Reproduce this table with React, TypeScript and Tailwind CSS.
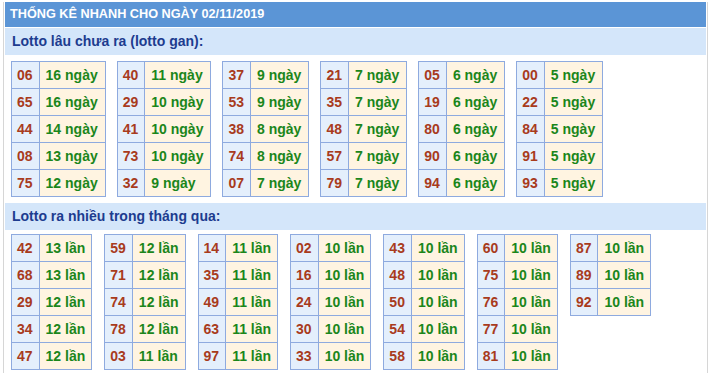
import React from 'react';

type Row = [string, string];

const ganTables: Row[][] = [
  [['06', '16 ngày'], ['65', '16 ngày'], ['44', '14 ngày'], ['08', '13 ngày'], ['75', '12 ngày']],
  [['40', '11 ngày'], ['29', '10 ngày'], ['41', '10 ngày'], ['73', '10 ngày'], ['32', '9 ngày']],
  [['37', '9 ngày'], ['53', '9 ngày'], ['38', '8 ngày'], ['74', '8 ngày'], ['07', '7 ngày']],
  [['21', '7 ngày'], ['35', '7 ngày'], ['48', '7 ngày'], ['57', '7 ngày'], ['79', '7 ngày']],
  [['05', '6 ngày'], ['19', '6 ngày'], ['80', '6 ngày'], ['90', '6 ngày'], ['94', '6 ngày']],
  [['00', '5 ngày'], ['22', '5 ngày'], ['84', '5 ngày'], ['91', '5 ngày'], ['93', '5 ngày']],
];

const hotTables: Row[][] = [
  [['42', '13 lần'], ['68', '13 lần'], ['29', '12 lần'], ['34', '12 lần'], ['47', '12 lần']],
  [['59', '12 lần'], ['71', '12 lần'], ['74', '12 lần'], ['78', '12 lần'], ['03', '11 lần']],
  [['14', '11 lần'], ['35', '11 lần'], ['49', '11 lần'], ['63', '11 lần'], ['97', '11 lần']],
  [['02', '10 lần'], ['16', '10 lần'], ['24', '10 lần'], ['30', '10 lần'], ['33', '10 lần']],
  [['43', '10 lần'], ['48', '10 lần'], ['50', '10 lần'], ['54', '10 lần'], ['58', '10 lần']],
  [['60', '10 lần'], ['75', '10 lần'], ['76', '10 lần'], ['77', '10 lần'], ['81', '10 lần']],
  [['87', '10 lần'], ['89', '10 lần'], ['92', '10 lần']],
];

const LottoTable = ({ rows, wide }: { rows: Row[]; wide?: boolean }) => (
  <table className="border-collapse text-[14px] font-bold leading-[26px]">
    <tbody>
      {rows.map(([num, val]) => (
        <tr key={num + val}>
          <td className="border border-[#8eaadf] bg-[#e4effc] pl-[5px] pr-[6px] py-0 text-[#a83b1d]">{num}</td>
          <td
            className={
              wide
                ? 'border border-[#8eaadf] bg-[#fff4e1] pl-[6px] pr-[7px] py-0 text-[#1b861b] whitespace-nowrap'
                : 'border border-[#8eaadf] bg-[#fff4e1] px-[6px] py-0 text-[#1b861b] whitespace-nowrap'
            }
          >
            {val}
          </td>
        </tr>
      ))}
    </tbody>
  </table>
);

const SectionBar = ({ title }: { title: string }) => (
  <div className="h-[27px] bg-[#d4e6fa] pl-[7px] flex items-center text-[14px] font-bold text-[#1d3c8f]">
    {title}
  </div>
);

export default function App() {
  return (
    <div className="pt-[2px] pl-[3px] bg-white h-[373px] w-[709px]" style={{ fontFamily: '"Liberation Sans", Arial, sans-serif' }}>
      <div className="w-[705px] h-[371px] border-x border-[#d6d6d6] px-px">
        <div className="h-[25px] bg-[#5b95d6] pl-[5px] flex items-center text-[12.7px] font-bold text-white">
          THỐNG KÊ NHANH CHO NGÀY 02/11/2019
        </div>
        <div className="mt-px">
          <SectionBar title="Lotto lâu chưa ra (lotto gan):" />
        </div>
        <div className="mt-[6px] pl-[6px] flex items-start gap-[11px]">
          {ganTables.map((rows, i) => (
            <LottoTable key={i} rows={rows} wide />
          ))}
        </div>
        <div className="mt-[6px]">
          <SectionBar title="Lotto ra nhiều trong tháng qua:" />
        </div>
        <div className="mt-[4px] pl-[6px] flex items-start gap-3">
          {hotTables.map((rows, i) => (
            <LottoTable key={i} rows={rows} />
          ))}
        </div>
      </div>
    </div>
  );
}
